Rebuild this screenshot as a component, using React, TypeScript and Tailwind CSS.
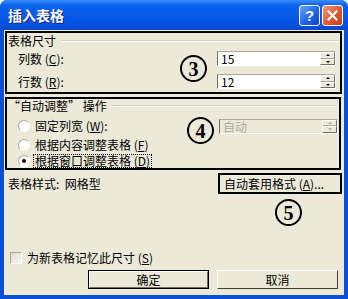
import React from 'react'

const font = "font-['Noto_Sans_CJK_SC','Noto_Sans',sans-serif]"

function Spinner({ disabled }: { disabled?: boolean }) {
  const arrow = disabled ? 'border-b-[#ACA899]' : 'border-b-black'
  const arrowDown = disabled ? 'border-t-[#ACA899]' : 'border-t-black'
  return (
    <div className="flex flex-col w-[15px] h-full">
      <div className="flex-1 flex items-center justify-center bg-[#ECE9D8] border-t border-l border-white border-b border-r border-b-[#ACA899] border-r-[#716F64]">
        <div className={`w-0 h-0 border-l-[2px] border-r-[2px] border-b-[2px] border-l-transparent border-r-transparent ${arrow}`} />
      </div>
      <div className="flex-1 flex items-center justify-center bg-[#ECE9D8] border-t border-l border-white border-b border-r border-b-[#716F64] border-r-[#716F64]">
        <div className={`w-0 h-0 border-l-[2px] border-r-[2px] border-t-[2px] border-l-transparent border-r-transparent ${arrowDown}`} />
      </div>
    </div>
  )
}

function SpinInput({ value, disabled }: { value: string; disabled?: boolean }) {
  return (
    <div
      className={`w-[119px] h-[15px] flex items-stretch border-l border-t border-l-[#716F64] border-t-[#ACA899] border-r border-b border-r-white border-b-white ${
        disabled ? 'bg-[#ECE9D8]' : 'bg-white'
      }`}
    >
      <div className={`flex-1 pl-[3px] text-[12px] leading-[14px] ${disabled ? 'text-[#ACA899]' : 'text-black'}`}>
        {value}
      </div>
      <Spinner disabled={disabled} />
    </div>
  )
}

function Radio({ checked }: { checked?: boolean }) {
  return (
    <div className="w-[12px] h-[12px] rounded-full border border-t-[#ACA899] border-l-[#ACA899] border-b-white border-r-white bg-white flex items-center justify-center">
      {checked && <div className="w-[4px] h-[4px] rounded-full bg-black" />}
    </div>
  )
}

function GroupHeader({ label }: { label: string }) {
  return (
    <div className="flex items-center">
      <span className="pl-[1px] pr-[6px] whitespace-nowrap">{label}</span>
      <div className="flex-1 mr-[2px] border-t border-t-[#D0D0BF] border-b border-b-white" />
    </div>
  )
}

function Circled({ n }: { n: string }) {
  return (
    <div className="w-[27px] h-[27px] rounded-full border-2 border-black flex items-center justify-center text-[20px] leading-none font-bold font-['Liberation_Serif',serif] text-black bg-[#ECE9D8]">
      {n}
    </div>
  )
}

export default function App() {
  return (
    <div className={`w-[348px] h-[299px] flex flex-col bg-[#0A4FD8] rounded-t-[7px] overflow-hidden text-[12px] leading-[14px] text-black ${font}`}>
      {/* Title bar */}
      <div className="h-[30px] flex items-center pl-[8px] pr-[5px] bg-[linear-gradient(to_bottom,#3A8CFF_0%,#0A62EE_18%,#0558E6_60%,#0350DC_85%,#0848C6_100%)]">
        <span className="flex-1 text-white font-bold text-[14px] leading-none [text-shadow:1px_1px_0_#0A1E8A]">
          插入表格
        </span>
        <div className="flex gap-[2px]">
          <div className="w-[21px] h-[21px] rounded-[3px] border border-white bg-[linear-gradient(135deg,#6FA3FF,#1A5FE8_60%,#0B45C8)] flex items-center justify-center text-white font-bold text-[15px] leading-none font-['Liberation_Sans',sans-serif]">
            ?
          </div>
          <div className="w-[21px] h-[21px] rounded-[3px] border border-white bg-[linear-gradient(135deg,#F39A7E,#E0582F_55%,#C43C18)] flex items-center justify-center">
            <svg width="11" height="11" viewBox="0 0 11 11">
              <path d="M1.5 1.5L9.5 9.5M9.5 1.5L1.5 9.5" stroke="white" strokeWidth="2.2" strokeLinecap="square" />
            </svg>
          </div>
        </div>
      </div>

      {/* Body */}
      <div className="flex-1 mx-[4px] mb-[4px] bg-[#ECE9D8] flex flex-col">
        {/* Group 1 */}
        <div className="relative mt-[1px] ml-[1px] mr-[2px] h-[63px] border-2 border-black flex flex-col pb-[3px]">
          <div className="h-[16px] flex items-center">
            <div className="flex-1">
              <GroupHeader label="表格尺寸" />
            </div>
          </div>
          <div className="mt-[3px] h-[15px] flex items-center">
            <span className="pl-[11px] flex-1">列数 (<span className="underline">C</span>):</span>
            <div className="mr-[4px]">
              <SpinInput value="15" />
            </div>
          </div>
          <div className="mt-[8px] h-[15px] flex items-center">
            <span className="pl-[11px] flex-1">行数 (<span className="underline">R</span>):</span>
            <div className="mr-[4px]">
              <SpinInput value="12" />
            </div>
          </div>
          <div className="absolute left-[173px] top-[22px]">
            <Circled n="3" />
          </div>
        </div>

        {/* Group 2 */}
        <div className="relative mt-[3px] ml-[1px] mr-[3px] h-[73px] border-2 border-black flex flex-col">
          <div className="h-[14px] flex items-center">
            <div className="flex-1">
              <GroupHeader label="“自动调整” 操作" />
            </div>
          </div>
          <div className="mt-[5px] h-[16px] flex items-center">
            <div className="pl-[11px] pr-[5px]">
              <Radio />
            </div>
            <span className="flex-1">固定列宽 (<span className="underline">W</span>):</span>
            <div className="mr-[1px]">
              <SpinInput value="自动" disabled />
            </div>
          </div>
          <div className="mt-[3px] h-[16px] flex items-center">
            <div className="pl-[11px] pr-[5px]">
              <Radio />
            </div>
            <span>根据内容调整表格 (<span className="underline">F</span>)</span>
          </div>
          <div className="mt-[1px] h-[14px] flex items-center">
            <div className="pl-[11px] pr-[3px]">
              <Radio checked />
            </div>
            <span className="px-[1px] border border-dotted border-black leading-[12px]">
              根据窗口调整表格 (<span className="underline">D</span>)
            </span>
          </div>
          <div className="absolute left-[180px] top-[18px]">
            <Circled n="4" />
          </div>
        </div>

        {/* Table style */}
        <div className="relative mt-[3px] flex items-center h-[21px]">
          <span className="flex-1 pl-[4px]">表格样式:&nbsp;&nbsp;网格型</span>
          <div className="w-[124px] h-[21px] mr-[2px] border-2 border-black flex items-center pl-[4px] whitespace-nowrap">
            自动套用格式 (<span className="underline">A</span>)...
          </div>
          <div className="absolute left-[271px] top-[26px]">
            <Circled n="5" />
          </div>
        </div>

        <div className="flex-1" />

        {/* Remember size */}
        <div className="flex items-center h-[12px] pl-[6px]">
          <div className="w-[12px] h-[12px] border border-t-[#ACA899] border-l-[#ACA899] border-b-white border-r-white bg-[linear-gradient(135deg,#DCDCD4,#F6F6F2)]" />
          <span className="pl-[5px]">为新表格记忆此尺寸 (<span className="underline">S</span>)</span>
        </div>

        {/* Buttons */}
        <div className="mt-[6px] mb-[6px] flex justify-end gap-[8px] pr-[6px]">
          <div className="w-[121px] h-[19px] border border-black">
            <div className="w-full h-full flex items-center justify-center border-t border-l border-white border-b border-r border-b-[#716F64] border-r-[#716F64]">
              确定
            </div>
          </div>
          <div className="w-[121px] h-[19px] flex items-center justify-center border-t border-l border-white border-b border-r border-b-[#404040] border-r-[#404040]">
            取消
          </div>
        </div>
      </div>
    </div>
  )
}
